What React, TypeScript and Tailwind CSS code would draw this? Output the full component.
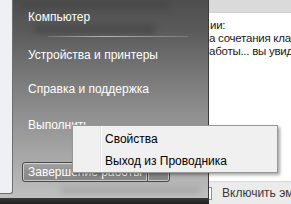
export default function App() {
  return (
    <div className="relative flex h-[204px] w-[291px] overflow-hidden bg-[#303030] font-['Liberation_Sans',Arial,sans-serif] text-[12px]">
      {/* Start menu */}
      <div className="flex h-full w-[209px] flex-col">
        <div className="relative flex h-[198px] border-r border-[#3a3a3a] bg-[linear-gradient(180deg,#4e4e4e_0px,#5a5a5a_30px,#6e6e6e_60px,#878787_100px,#9e9e9e_140px,#b2b2b2_175px,#c0c0c0_198px)]">
          {/* blurred glass texture */}
          <div className="absolute left-[35px] top-[26px] h-[7px] w-[120px] bg-black/20 blur-[3px]" />
          <div className="absolute left-[20px] top-[3px] h-[5px] w-[150px] bg-black/10 blur-[3px]" />
          <div className="absolute left-[60px] top-[187px] h-[7px] w-[140px] bg-black/10 blur-[3px]" />
          {/* left white pane edge */}
          <div className="relative h-[194px] w-[13px] shrink-0 rounded-br-[3px] border-r border-b border-[#6f6f6f] bg-[#eef0f3]" />
          {/* right pane */}
          <div className="relative flex flex-1 flex-col pl-[15px] pt-[9px] text-white">
            <div className="h-[16px] leading-[16px]">Компьютер</div>
            <div className="ml-[20px] mr-[20px] mt-[11px] h-px bg-[linear-gradient(90deg,rgba(255,255,255,0.15),rgba(255,255,255,0.55)_40%,rgba(255,255,255,0.15))]" />
            <div className="mt-[10px] h-[16px] leading-[16px]">Устройства и принтеры</div>
            <div className="mt-[18px] h-[16px] leading-[16px]">Справка и поддержка</div>
            <div className="mt-[20px] h-[16px] leading-[16px]">Выполнить...</div>
            {/* shutdown button */}
            <div className="-ml-[6px] mt-[29px] flex h-[20px]">
              <div className="h-[20px] w-[126px] rounded-l-[3px] border border-[#474747] bg-[linear-gradient(180deg,#a4a4a4,#8e8e8e_50%,#858585)] pl-[5px] leading-[18px] text-white shadow-[inset_0_0_0_1px_rgba(255,255,255,0.55)]">
                Завершение работы
              </div>
              <div className="-ml-px h-[20px] w-[23px] rounded-r-[3px] border border-[#474747] bg-[linear-gradient(180deg,#a4a4a4,#8e8e8e_50%,#858585)] shadow-[inset_0_0_0_1px_rgba(255,255,255,0.55)]" />
            </div>
          </div>
        </div>
        <div className="flex-1 bg-[linear-gradient(180deg,#3a3a3a,#1e1e1e)]" />
      </div>

      {/* Window behind */}
      <div className="flex h-full min-w-0 flex-1 flex-col bg-white text-[#1a1a1a]">
        <div className="h-[13px] border-b border-[#cfcfcf] bg-[#dadada]" />
        <div className="flex flex-1 flex-col overflow-hidden whitespace-nowrap pt-[6px] text-[11.5px] leading-[13px] tracking-[-0.25px]">
          <div className="pl-[1px]">ии:</div>
          <div>а сочетания клав</div>
          <div>аботы... вы увид</div>
        </div>
        <div className="flex h-[23px] items-center overflow-hidden border-t border-[#d8d8d8] bg-[#ebebeb]">
          <div className="h-[13px] w-[3px] shrink-0 border-y border-r border-[#8e8e8e] bg-white" />
          <div className="ml-[10px] whitespace-nowrap leading-[22px] text-[#3a3a3a]">Включить эм</div>
        </div>
      </div>

      {/* Context menu */}
      <div className="absolute left-[72px] top-[125px] w-[206px] border border-[#979797] bg-[#f0f0f0] pt-[2px] text-black shadow-[2px_2px_3px_rgba(0,0,0,0.35)]">
        <div className="absolute bottom-0 left-[27px] top-0 w-[2px] border-l border-r border-l-[#e2e3e3] border-r-white" />
        <div className="relative h-[22px] pl-[32px] leading-[22px]">Свойства</div>
        <div className="relative h-[22px] pl-[32px] leading-[22px]">Выход из Проводника</div>
      </div>
    </div>
  );
}
